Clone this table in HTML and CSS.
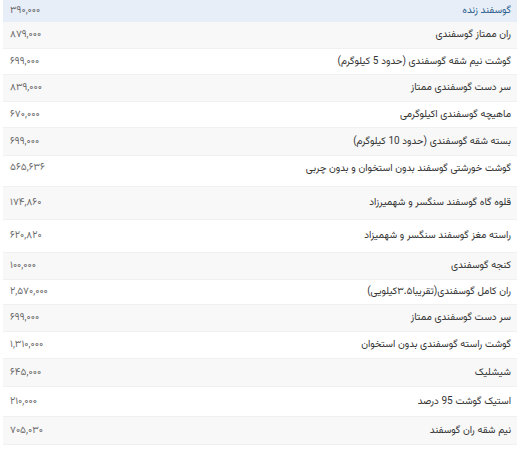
FILE: index.html
```html
<!DOCTYPE html>
<html lang="fa" dir="rtl">
<head>
<meta charset="utf-8">
<title>قیمت گوشت گوسفندی</title>
<link rel="stylesheet" href="styles.css">
</head>
<body>
<div class="table">
  <div class="row head h22"><span class="name">گوسفند زنده</span><span class="price">۳۹۰,۰۰۰</span></div>
  <div class="row odd h27"><span class="name">ران ممتاز گوسفندی</span><span class="price">۸۷۹,۰۰۰</span></div>
  <div class="row h26"><span class="name">گوشت نیم شقه گوسفندی (حدود 5 کیلوگرم)</span><span class="price">۶۹۹,۰۰۰</span></div>
  <div class="row odd h27"><span class="name">سر دست گوسفندی ممتاز</span><span class="price">۸۳۹,۰۰۰</span></div>
  <div class="row h26"><span class="name">ماهیچه گوسفندی اکیلوگرمی</span><span class="price">۶۷۰,۰۰۰</span></div>
  <div class="row odd h28"><span class="name">بسته شقه گوسفندی (حدود 10 کیلوگرم)</span><span class="price">۶۹۹,۰۰۰</span></div>
  <div class="row h31 top"><span class="name">گوشت خورشتی گوسفند بدون استخوان و بدون چربی</span><span class="price">۵۶۵,۶۳۶</span></div>
  <div class="row odd h33"><span class="name">قلوه گاه گوسفند سنگسر و شهمیرزاد</span><span class="price">۱۷۴,۸۶۰</span></div>
  <div class="row h33"><span class="name">راسته مغز گوسفند سنگسر و شهمیزاد</span><span class="price">۶۲۰,۸۲۰</span></div>
  <div class="row odd h27"><span class="name">کنجه گوسفندی</span><span class="price">۱۰۰,۰۰۰</span></div>
  <div class="row h25"><span class="name">ران کامل گوسفندی(تقریبا۳.۵کیلویی)</span><span class="price">۲,۵۷۰,۰۰۰</span></div>
  <div class="row odd h27"><span class="name">سر دست گوسفندی ممتاز</span><span class="price">۶۹۹,۰۰۰</span></div>
  <div class="row h27"><span class="name">گوشت راسته گوسفندی بدون استخوان</span><span class="price">۱,۳۱۰,۰۰۰</span></div>
  <div class="row odd h28"><span class="name">شیشلیک</span><span class="price">۶۴۵,۰۰۰</span></div>
  <div class="row h30"><span class="name">استیک گوشت 95 درصد</span><span class="price">۲۱۰,۰۰۰</span></div>
  <div class="row odd h28"><span class="name">نیم شقه ران گوسفند</span><span class="price">۷۰۵,۰۳۰</span></div>
</div>
</body>
</html>
```

FILE: styles.css
```css
html, body {
  margin: 0;
  padding: 0;
  background: #ffffff;
}

body {
  font-family: "Vazirmatn", "Noto Sans Arabic", "DejaVu Sans", sans-serif;
  color: #333333;
}

.table {
  margin: 0 2px 0 3px;
  display: flex;
  flex-direction: column;
}

.row {
  display: flex;
  align-items: center;
  justify-content: space-between;
  padding: 0 6px 0 7px;
  border-bottom: 1px solid #f0f0f0;
  box-sizing: border-box;
}

.row.odd {
  background: #f8f8f8;
}

.row.head {
  background: #e7eef8;
  border-bottom-color: #e7eef8;
}

.row.head .name {
  color: #2d5f8e;
}

.row.top {
  align-items: flex-start;
  padding-top: 5px;
}

.name {
  font-size: 10px;
  line-height: 16px;
  white-space: nowrap;
}

.price {
  font-size: 10px;
  line-height: 14px;
  color: #6b6b6b;
  direction: ltr;
}

.h22 { height: 22px; }
.h25 { height: 25px; }
.h26 { height: 26px; }
.h27 { height: 27px; }
.h28 { height: 28px; }
.h30 { height: 30px; }
.h31 { height: 31px; }
.h33 { height: 33px; }
```
